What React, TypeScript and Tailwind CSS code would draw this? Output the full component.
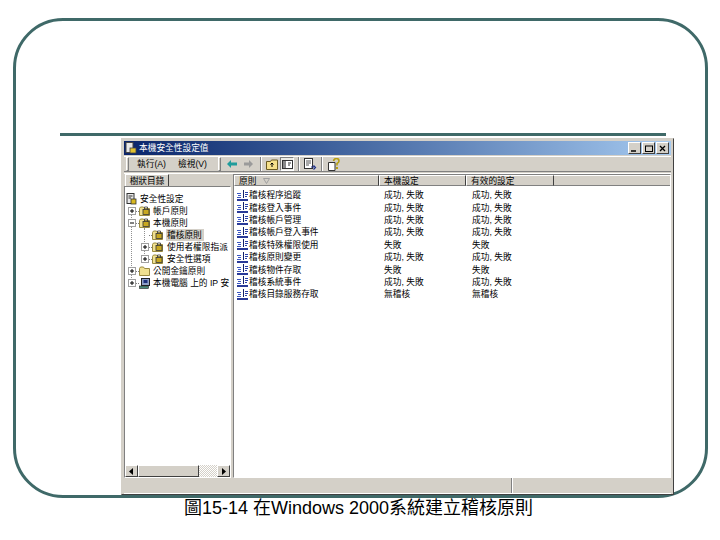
import type { ReactNode } from 'react';

const treeRows = [
  { label: '安全性設定', indent: 0, icon: 'shield' },
  { label: '帳戶原則', indent: 1, icon: 'lock', box: '+' },
  { label: '本機原則', indent: 1, icon: 'lock', box: '-' },
  { label: '稽核原則', indent: 2, icon: 'lock', selected: true },
  { label: '使用者權限指派', indent: 2, icon: 'lock', box: '+' },
  { label: '安全性選項', indent: 2, icon: 'lock', box: '+' },
  { label: '公開金鑰原則', indent: 1, icon: 'folder', box: '+' },
  { label: '本機電腦 上的 IP 安', indent: 1, icon: 'pc', box: '+' },
];

const policyRows = [
  ['稽核程序追蹤', '成功, 失敗', '成功, 失敗'],
  ['稽核登入事件', '成功, 失敗', '成功, 失敗'],
  ['稽核帳戶管理', '成功, 失敗', '成功, 失敗'],
  ['稽核帳戶登入事件', '成功, 失敗', '成功, 失敗'],
  ['稽核特殊權限使用', '失敗', '失敗'],
  ['稽核原則變更', '成功, 失敗', '成功, 失敗'],
  ['稽核物件存取', '失敗', '失敗'],
  ['稽核系統事件', '成功, 失敗', '成功, 失敗'],
  ['稽核目錄服務存取', '無稽核', '無稽核'],
];

function Folder({ lock }: { lock?: boolean }) {
  return (
    <svg width="11" height="10" viewBox="0 0 11 10" className="shrink-0">
      <path d="M0.5 2.5 L1.5 1 H4.5 L5.5 2.5 H10.5 V9.5 H0.5 Z" fill="#f0e090" stroke="#9a8a40" />
      {lock && <rect x="4" y="3.5" width="6" height="5" fill="#c9a820" stroke="#333" strokeWidth="0.8" />}
      {lock && <path d="M5.5 3.5 V1 H8.5 V3.5" fill="none" stroke="#333" strokeWidth="0.8" />}
    </svg>
  );
}

function TreeIcon({ type }: { type: string }) {
  if (type === 'folder') return <Folder />;
  if (type === 'lock') return <Folder lock />;
  if (type === 'pc') {
    return (
      <svg width="11" height="11" viewBox="0 0 11 11" className="shrink-0">
        <rect x="2.5" y="0.5" width="8" height="7" fill="#8fa0c8" stroke="#222" />
        <rect x="4.5" y="2" width="4" height="3" fill="#1c2f7a" />
        <rect x="0.5" y="8" width="9" height="2.5" fill="#4a8a7a" stroke="#222" strokeWidth="0.6" />
      </svg>
    );
  }
  return (
    <svg width="11" height="12" viewBox="0 0 11 12" className="shrink-0">
      <rect x="1" y="0.5" width="7" height="10" fill="#e8e8e8" stroke="#333" />
      <path d="M2.5 3 H6.5 M2.5 5 H5" stroke="#333" />
      <rect x="5" y="6" width="5" height="5" fill="#d8b820" stroke="#333" strokeWidth="0.8" />
    </svg>
  );
}

function PolicyIcon() {
  return (
    <svg width="11" height="11" viewBox="0 0 11 11" className="shrink-0">
      <path d="M0 3.5 H4 M1 5.5 H4 M0 7.5 H4" stroke="#3a55c0" />
      <path d="M6.5 0 V8" stroke="#14206a" />
      <path d="M8 2.5 H11 M8 4.5 H11 M8 6.5 H10" stroke="#2a3fa8" />
      <rect x="0" y="9" width="11" height="2" fill="#2a3a98" />
    </svg>
  );
}

function Expander({ sign }: { sign: string }) {
  return (
    <span className="flex h-[8px] w-[8px] shrink-0 items-center justify-center border border-[#a0a0a0] bg-white">
      <svg width="6" height="6" viewBox="0 0 6 6">
        <path d={sign === '+' ? 'M1 3 H5 M3 1 V5' : 'M1 3 H5'} stroke="#000" />
      </svg>
    </span>
  );
}

function Separator() {
  return <div className="h-[14px] w-[2px] shrink-0 border-l border-r border-l-[#808080] border-r-white" />;
}

function Gripper() {
  return <div className="h-[14px] w-[3px] shrink-0 border border-t-white border-l-white border-r-[#808080] border-b-[#808080]" />;
}

function WinButton({ children }: { children: ReactNode }) {
  return (
    <div className="flex h-[12px] w-[13px] items-center justify-center border border-t-white border-l-white border-r-[#404040] border-b-[#404040] bg-[#d4d0c8]">
      {children}
    </div>
  );
}

function HeaderCell({ width, children }: { width: string; children?: ReactNode }) {
  return (
    <div className={`flex h-full items-center border border-t-white border-l-white border-r-[#404040] border-b-[#808080] bg-[#d4d0c8] pl-[4px] ${width}`}>
      {children}
    </div>
  );
}

function ScrollArrow({ d }: { d: string }) {
  return (
    <div className="flex h-full w-[13px] shrink-0 items-center justify-center border border-t-white border-l-white border-r-[#404040] border-b-[#404040] bg-[#d4d0c8]">
      <svg width="5" height="7" viewBox="0 0 5 7">
        <path d={d} fill="#000" />
      </svg>
    </div>
  );
}

export default function App() {
  return (
    <div className="h-[540px] w-[720px] overflow-hidden bg-white font-['Liberation_Sans','Noto_Sans_CJK_TC',sans-serif] text-black">
      <div className="h-[18px]" />
      <div className="ml-[13px] h-[480px] w-[695px] rounded-[50px] border-[3px] border-[#3f6968]">
        <div className="h-[112px]" />
        <div className="ml-[44px] h-[3px] w-[606px] bg-[#3f6968]" />
        <div className="mt-[2px] ml-[105px] flex h-[357px] w-[553px] flex-col border border-t-[#d4d0c8] border-l-[#d4d0c8] border-r-[#404040] border-b-[#404040] bg-[#d4d0c8] px-[2px] pt-[2px] text-[8.7px] leading-[12px]">
          {/* title bar */}
          <div className="flex h-[14px] shrink-0 items-center bg-gradient-to-r from-[#0a246a] to-[#a6caf0] pl-[1px] pr-[2px] text-white">
            <svg width="12" height="12" viewBox="0 0 12 12" className="mr-[2px] shrink-0">
              <rect x="1" y="0.5" width="7" height="10" fill="#e8e8e8" stroke="#444" />
              <rect x="5" y="6" width="6" height="5" fill="#e0c030" stroke="#444" strokeWidth="0.8" />
            </svg>
            <span>本機安全性設定值</span>
            <div className="ml-auto flex gap-[1px]">
              <WinButton>
                <svg width="7" height="7" viewBox="0 0 7 7"><path d="M0 6 H5" stroke="#000" strokeWidth="1.5" /></svg>
              </WinButton>
              <WinButton>
                <svg width="8" height="7" viewBox="0 0 8 7"><rect x="0.5" y="1" width="7" height="5.5" fill="none" stroke="#000" /></svg>
              </WinButton>
              <WinButton>
                <svg width="7" height="7" viewBox="0 0 7 7"><path d="M1 1 L6 6 M6 1 L1 6" stroke="#000" strokeWidth="1.3" /></svg>
              </WinButton>
            </div>
          </div>

          {/* toolbar */}
          <div className="mt-[1px] flex h-[16px] shrink-0 items-center border-t border-b border-t-white border-b-[#808080] pl-[2px]">
            <Gripper />
            <span className="ml-[8px] w-[41px]">執行(A)</span>
            <span className="w-[40px]">檢視(V)</span>
            <Gripper />
            <svg width="10" height="8" viewBox="0 0 10 8" className="ml-[6px]"><path d="M0 4 L4 0 V2.5 H10 V5.5 H4 V8 Z" fill="#1f9c9c" /></svg>
            <svg width="9" height="8" viewBox="0 0 9 8" className="ml-[7px]"><path d="M9 4 L5 0 V2.5 H0 V5.5 H5 V8 Z" fill="#9a9a9a" /></svg>
            <div className="ml-[7px]"><Separator /></div>
            <svg width="12" height="11" viewBox="0 0 12 11" className="ml-[4px]">
              <path d="M0.5 2.5 H4.5 L5.5 1 H11.5 V10.5 H0.5 Z" fill="#f5e08a" stroke="#6a5a20" />
              <path d="M6 8 V4 M4.5 5.5 L6 4 L7.5 5.5" fill="none" stroke="#000" />
            </svg>
            <div className="ml-[2px] flex h-[14px] w-[14px] items-center justify-center border border-t-[#808080] border-l-[#808080] border-r-white border-b-white bg-[#ecebe6]">
              <svg width="11" height="9" viewBox="0 0 11 9">
                <rect x="0.5" y="0.5" width="10" height="8" fill="#fff" stroke="#333" />
                <rect x="1" y="1" width="3" height="7" fill="#888" />
                <path d="M6 3 H9 M6 5 H8" stroke="#333" />
              </svg>
            </div>
            <div className="ml-[4px]"><Separator /></div>
            <svg width="13" height="13" viewBox="0 0 13 13" className="ml-[4px]">
              <rect x="0.5" y="0.5" width="8" height="10" fill="#fff" stroke="#333" />
              <path d="M2 3 H7 M2 5 H7 M2 7 H5" stroke="#555" />
              <path d="M7 9 H11 M9.5 7.5 L11.5 9.5 L9.5 11.5" fill="none" stroke="#1c2f8a" strokeWidth="1.2" />
            </svg>
            <div className="ml-[4px]"><Separator /></div>
            <svg width="12" height="13" viewBox="0 0 12 13" className="ml-[5px]">
              <path d="M0.5 4.5 H7 L7 12.5 H0.5 Z" fill="#fff" stroke="#333" />
              <path d="M5.5 3 Q6 0.5 8.5 0.5 Q11 0.5 11 3 Q11 4.5 9 5.5 V7.5" fill="none" stroke="#b8a010" strokeWidth="1.6" />
              <rect x="8" y="9" width="2" height="2" fill="#b8a010" />
            </svg>
          </div>

          {/* panes */}
          <div className="mt-[1px] flex min-h-0 flex-1 border-t border-t-white">
            <div className="flex w-[107px] shrink-0 flex-col">
              <div className="h-[12px] shrink-0 pl-[1px]">
                <div className="flex h-[13px] w-[44px] items-center justify-center border-r border-r-[#404040] border-t border-t-white border-l border-l-white">
                  樹狀目錄
                </div>
              </div>
              <div className="flex min-h-0 flex-1 flex-col border border-t-[#808080] border-l-[#808080] border-r-white border-b-white bg-white">
                <div className="relative min-h-0 flex-1 overflow-hidden pt-[6px]">
                  {/* tree guide lines */}
                  <span className="absolute top-[23px] left-[6px] h-[72px] border-l border-dotted border-[#909090]" />
                  <span className="absolute top-[41px] left-[19px] h-[30px] border-l border-dotted border-[#909090]" />
                  {treeRows.map((row) => (
                    <div key={row.label} className="relative flex h-[12px] items-center whitespace-nowrap">
                      {row.indent === 0 ? (
                        <div className="ml-[1px] flex items-center">
                          <TreeIcon type={row.icon} />
                        </div>
                      ) : (
                        <div className={row.indent === 1 ? 'ml-[3px] flex items-center' : 'ml-[16px] flex items-center'}>
                          {row.box ? <Expander sign={row.box} /> : <span className="w-[8px] shrink-0" />}
                          <span className="w-[3px] shrink-0 border-t border-dotted border-[#808080]" />
                          <TreeIcon type={row.icon} />
                        </div>
                      )}
                      <span className={row.selected ? 'ml-[3px] bg-[#d4d0c8] pl-[1px] pr-[2px]' : row.indent === 2 ? 'ml-[4px]' : 'ml-[3px]'}>{row.label}</span>
                    </div>
                  ))}
                </div>
                <div className="flex h-[12px] shrink-0">
                  <ScrollArrow d="M4 0 V7 L0 3.5 Z" />
                  <div className="h-full w-[61px] shrink-0 border border-t-white border-l-white border-r-[#404040] border-b-[#404040] bg-[#d4d0c8]" />
                  <div className="h-full flex-1 bg-[repeating-conic-gradient(#d4d0c8_0_25%,#ffffff_0_50%)] bg-[length:2px_2px]" />
                  <ScrollArrow d="M1 0 V7 L5 3.5 Z" />
                </div>
              </div>
            </div>

            <div className="ml-[2px] flex min-w-0 flex-1 flex-col border border-t-[#808080] border-l-[#808080] border-r-white border-b-white bg-white">
              <div className="flex h-[11px] shrink-0 bg-[#d4d0c8]">
                <HeaderCell width="w-[145px]">
                  <span>原則</span>
                  <svg width="7" height="6" viewBox="0 0 7 6" className="ml-[7px]"><path d="M0.5 0.5 H6.5 L3.5 5.5 Z" fill="none" stroke="#a0a0a0" /></svg>
                </HeaderCell>
                <HeaderCell width="w-[87px]">本機設定</HeaderCell>
                <HeaderCell width="w-[88px]">有效的設定</HeaderCell>
                <div className="h-full flex-1 border-t border-t-white border-b border-b-[#808080]" />
              </div>
              <div className="min-h-0 flex-1 overflow-hidden pt-[3px]">
                {policyRows.map(([name, local, effective]) => (
                  <div key={name} className="flex h-[12.4px] items-center whitespace-nowrap">
                    <div className="flex w-[145px] items-center pl-[3px]">
                      <PolicyIcon />
                      <span className="ml-[1px]">{name}</span>
                    </div>
                    <div className="w-[87px] pl-[5px]">{local}</div>
                    <div className="w-[88px] pl-[6px]">{effective}</div>
                  </div>
                ))}
              </div>
            </div>
          </div>

          {/* status bar */}
          <div className="flex h-[16px] shrink-0 border-b border-b-white">
            <div className="w-[388px] border-r border-r-[#808080]" />
            <div className="flex-1 border-l border-l-white" />
          </div>
        </div>
      </div>
      <p className="ml-[184px] whitespace-nowrap text-[18px] leading-[20px]">圖15-14 在Windows 2000系統建立稽核原則</p>
    </div>
  );
}
